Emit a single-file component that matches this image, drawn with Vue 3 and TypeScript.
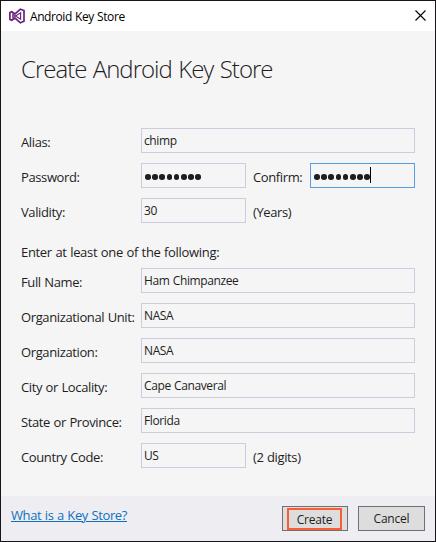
<script setup lang="ts">
import { ref } from 'vue'

interface Field {
  label: string
  value: string
  short?: boolean
  note?: string
}

const account: Field[] = [
  { label: 'Alias:', value: 'chimp' },
  { label: 'Password:', value: '', short: true },
  { label: 'Validity:', value: '30', short: true, note: '(Years)' },
]
const identity: Field[] = [
  { label: 'Full Name:', value: 'Ham Chimpanzee' },
  { label: 'Organizational Unit:', value: 'NASA' },
  { label: 'Organization:', value: 'NASA' },
  { label: 'City or Locality:', value: 'Cape Canaveral' },
  { label: 'State or Province:', value: 'Florida' },
  { label: 'Country Code:', value: 'US', short: true, note: '(2 digits)' },
]
const passwordDots = ref(8)
</script>

<template>
  <main class="window">
    <header class="titlebar">
      <svg class="logo" width="16" height="16" viewBox="0 0 16 16" fill="none" stroke="#68217a">
        <path stroke-width="1.7" d="M.9 4.6 2.8 3.8 6 5.9 11.4 1.2 15 2.5V13.3L11.4 14.8 6 10.1 2.8 12.2.9 11.4Z" />
        <path stroke-width="1.2" d="M3.8 6.3V9.7L11.6 4.8V11.2Z" />
      </svg>
      <span class="caption">Android Key Store</span>
      <svg class="close" width="11" height="11" viewBox="0 0 11 11">
        <path d="M.5.5 10.5 10.5M10.5.5.5 10.5" stroke="#000" stroke-width="1.1" />
      </svg>
    </header>

    <section class="content">
      <h1>Create Android Key Store</h1>
      <div class="group">
        <div v-for="f in account" :key="f.label" class="row">
          <label>{{ f.label }}</label>
          <div class="field" :class="{ short: f.short }">
            <span v-if="f.label === 'Password:'" class="dots"><i v-for="n in passwordDots" :key="n" /></span>
            <span v-else>{{ f.value }}</span>
          </div>
          <span v-if="f.note" class="note">{{ f.note }}</span>
          <template v-if="f.label === 'Password:'">
            <span class="note confirm">Confirm:</span>
            <div class="field focused">
              <span class="dots"><i v-for="n in passwordDots" :key="n" /></span><b class="caret" />
            </div>
          </template>
        </div>
      </div>
      <p class="hint">Enter at least one of the following:</p>
      <div class="group">
        <div v-for="f in identity" :key="f.label" class="row">
          <label>{{ f.label }}</label>
          <div class="field" :class="{ short: f.short }"><span>{{ f.value }}</span></div>
          <span v-if="f.note" class="note">{{ f.note }}</span>
        </div>
      </div>
    </section>

    <footer>
      <a>What is a Key Store?</a>
      <button class="create"><span>Create</span></button>
      <button class="cancel">Cancel</button>
    </footer>
  </main>
</template>

<style>
body {
  margin: 0;
}
</style>

<style scoped>
.window {
  box-sizing: border-box;
  width: 436px;
  height: 542px;
  border: 1px solid #17151a;
  background: #f5f5f5;
  display: flex;
  flex-direction: column;
  font-family: 'Open Sans', 'Noto Sans', sans-serif;
  font-size: 13px;
  letter-spacing: -0.38px;
  word-spacing: 0.5px;
  color: #1e1e1e;
  white-space: nowrap;
}
.titlebar {
  height: 30px;
  flex: none;
  background: #fff;
  display: flex;
  align-items: center;
  padding: 0 9px 0 8px;
}
.logo {
  margin-top: -1px;
}
.caption {
  margin-left: 5px;
  font-size: 12px;
  letter-spacing: -0.42px;
  color: #000;
}
.close {
  margin-left: auto;
  margin-top: -2px;
}
.content {
  flex: 1;
  padding: 0 20px;
}
h1 {
  margin: 0;
  padding-top: 20px;
  height: 77px;
  font-size: 24px;
  line-height: 36px;
  font-weight: 300;
  letter-spacing: -1px;
  word-spacing: 1.2px;
}
.group {
  display: flex;
  flex-direction: column;
  gap: 10px;
}
.row {
  display: flex;
  height: 25px;
}
label {
  width: 120px;
  flex: none;
  line-height: 29px;
}
.field {
  box-sizing: border-box;
  width: 274px;
  height: 25px;
  border: 1px solid #ccccdd;
  padding-left: 2px;
  font-size: 12px;
  line-height: 23px;
  display: flex;
}
.field.short {
  width: 105px;
}
.field.focused {
  width: 105px;
  border-color: #569de5;
}
.note {
  margin-left: 7px;
  line-height: 29px;
}
.confirm {
  width: 57px;
}
.dots {
  display: flex;
  gap: 1.6px;
  padding: 10px 0 0 1px;
}
.dots i {
  width: 5.6px;
  height: 5.6px;
  border-radius: 50%;
  background: #1e1e1e;
}
.caret {
  width: 1px;
  height: 16px;
  margin-top: 3px;
  background: #000;
}
.hint {
  margin: 0;
  height: 45px;
  padding-top: 19px;
  box-sizing: border-box;
  line-height: 20px;
  letter-spacing: -0.32px;
}
footer {
  height: 45px;
  flex: none;
  background: #eeeef2;
  display: flex;
  align-items: flex-start;
  padding: 0 10px;
  box-sizing: border-box;
}
a {
  color: #0e70c0;
  text-decoration: underline;
  line-height: 18px;
  margin-top: 10px;
  margin-right: auto;
}
button {
  box-sizing: border-box;
  height: 25px;
  width: 66px;
  margin: 10px 0 0 10px;
  padding: 0;
  border: 1px solid #717171;
  background: #dddddd;
  color: #1e1e1e;
  font: inherit;
  font-size: 12px;
  letter-spacing: -0.2px;
}
.create {
  display: flex;
}
.create span {
  box-sizing: border-box;
  width: 55px;
  height: 22px;
  margin: 1px 0 0 4px;
  border: 2px solid #fa5c36;
  line-height: 19px;
}
.cancel {
  width: 67px;
}
</style>
